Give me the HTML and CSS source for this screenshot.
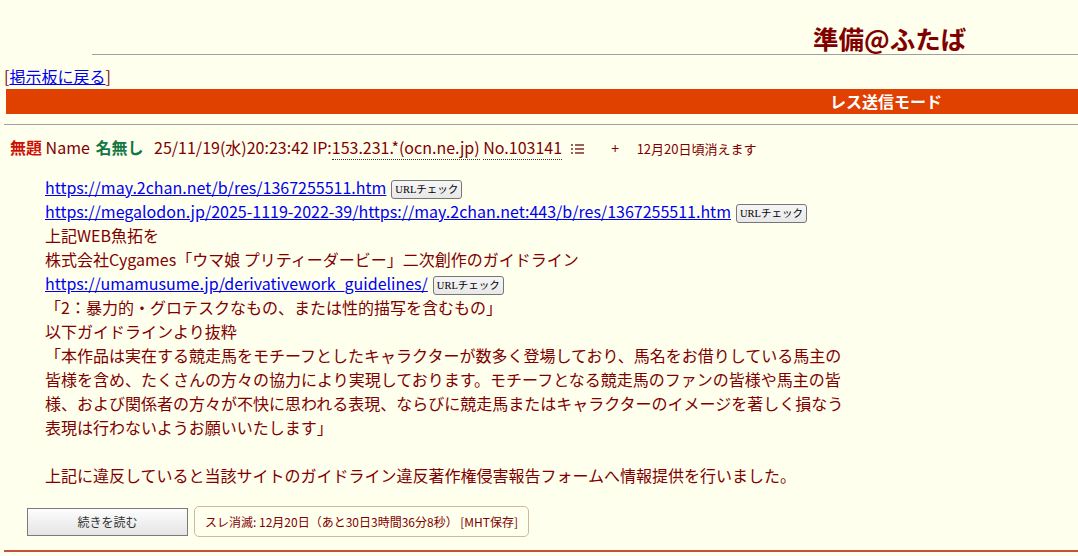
FILE: index.html
```html
<!DOCTYPE html>
<html lang="ja">
<head>
<meta charset="utf-8">
<title>準備@ふたば</title>
<link rel="stylesheet" href="styles.css">
</head>
<body>
<div class="page">
  <div class="hdp"><span class="tit">準備@ふたば</span></div>
  <div class="rule rule-top"></div>
  <div class="back">[<a href="#">掲示板に戻る</a>]</div>
  <div class="mode"><span>レス送信モード</span></div>
  <div class="rule rule-post"></div>
  <div class="thre">
    <div class="phead">
      <span class="subj">無題</span>
      <span class="lbl">Name</span>
      <span class="name">名無し</span>
      <span class="date">25/11/19(水)20:23:42 IP:<span class="dot">153.231.*(ocn.ne.jp)</span></span>
      <span class="dot">No.103141</span>
      <span class="menu"><svg width="13" height="10" viewBox="0 0 13 10"><g fill="#a0605a"><rect x="0" y="0" width="2" height="2"/><rect x="4" y="0" width="9" height="2"/><rect x="0" y="4" width="2" height="2"/><rect x="4" y="4" width="9" height="2"/><rect x="0" y="8" width="2" height="2"/><rect x="4" y="8" width="9" height="2"/></g></svg></span>
      <span class="plus">+</span>
      <span class="expire">12月20日頃消えます</span>
    </div>
    <blockquote class="com">
      <a href="#">https://may.2chan.net/b/res/1367255511.htm</a><button class="chk">URLチェック</button><br>
      <a href="#">https://megalodon.jp/2025-1119-2022-39/https://may.2chan.net:443/b/res/1367255511.htm</a><button class="chk">URLチェック</button><br>
      上記WEB魚拓を<br>
      株式会社Cygames「ウマ娘 プリティーダービー」二次創作のガイドライン<br>
      <a href="#">https://umamusume.jp/derivativework_guidelines/</a><button class="chk">URLチェック</button><br>
      「2：暴力的・グロテスクなもの、または性的描写を含むもの」<br>
      以下ガイドラインより抜粋<br>
      「本作品は実在する競走馬をモチーフとしたキャラクターが数多く登場しており、馬名をお借りしている馬主の皆様を含め、たくさんの方々の協力により実現しております。モチーフとなる競走馬のファンの皆様や馬主の皆様、および関係者の方々が不快に思われる表現、ならびに競走馬またはキャラクターのイメージを著しく損なう表現は行わないようお願いいたします」<br>
      <br>
      上記に違反していると当該サイトのガイドライン違反著作権侵害報告フォームへ情報提供を行いました。
    </blockquote>
    <div class="actions">
      <button class="cont">続きを読む</button>
      <span class="delinfo">スレ消滅: 12月20日（あと30日3時間36分8秒） [MHT保存]</span>
    </div>
  </div>
  <div class="sep"></div>
</div>
</body>
</html>
```
FILE: styles.css
```css
html, body {
  margin: 0;
  padding: 0;
  background: #ffffee;
}
body {
  color: #800000;
  font-family: "Noto Sans CJK JP", "Noto Sans", sans-serif;
  font-size: 16px;
  line-height: 24px;
}
.page {
  padding-left: 4px;
}
.hdp {
  padding-top: 22px;
  padding-left: 809px;
  height: 32px;
}
.tit {
  font-size: 25.5px;
  line-height: 32px;
  font-weight: bold;
  color: #800000;
}
.rule {
  height: 1px;
  background: #a0a0a0;
}
.rule-top {
  margin-left: 88px;
}
.back {
  margin-top: 9px;
  line-height: 24px;
  height: 24px;
}
.back a {
  color: #0000ee;
}
.mode {
  margin-top: 1px;
  margin-left: 2px;
  height: 25px;
  background: #e04000;
  color: #ffffff;
  font-weight: bold;
  line-height: 25px;
  padding-left: 824px;
}
.rule-post {
  margin-top: 10px;
}
.thre {
  margin-top: 10px;
}
.phead {
  padding-left: 6px;
  height: 24px;
  line-height: 24px;
  white-space: nowrap;
}
.subj {
  color: #cc1105;
  font-weight: bold;
}
.lbl {
  margin-right: 2px;
}
.name {
  color: #117743;
  font-weight: bold;
  margin-right: 7px;
}
.dot {
  border-bottom: 1px dotted #333333;
}
.menu {
  display: inline-block;
  margin-left: 5px;
  vertical-align: 0px;
}
.plus {
  display: inline-block;
  margin-left: 24px;
  font-size: 14px;
}
.expire {
  display: inline-block;
  margin-left: 14px;
  font-size: 13px;
}
.com {
  margin: 16px 0 0 41px;
  width: 802px;
  line-height: 24px;
}
.com a {
  color: #0000ee;
}
.chk {
  margin-left: 5px;
  font-family: "Liberation Serif", "Noto Sans CJK JP", serif;
  font-size: 10.5px;
  line-height: 14px;
  padding: 2px 3px 1px;
  border: 1px solid #767676;
  border-radius: 3px;
  background: linear-gradient(#f6f6f6, #e8e8e8);
  color: #000000;
  vertical-align: 1px;
}
.actions {
  display: flex;
  align-items: center;
  gap: 6px;
  margin-top: 19px;
  margin-left: 23px;
  height: 31px;
}
.cont {
  width: 161px;
  height: 28px;
  border: 1px solid #7a7a7a;
  border-radius: 0;
  background: linear-gradient(#fdfdfd, #e4e4e4);
  font-family: "Noto Sans CJK JP", sans-serif;
  font-size: 12px;
  color: #333333;
  padding: 0;
}
.delinfo {
  display: flex;
  align-items: center;
  height: 29px;
  padding: 0 10px;
  border: 1px solid #cbb9a4;
  border-radius: 5px;
  font-size: 12px;
  white-space: pre;
}
.sep {
  margin-top: 13px;
  height: 2px;
  background: #c4503e;
}
```
